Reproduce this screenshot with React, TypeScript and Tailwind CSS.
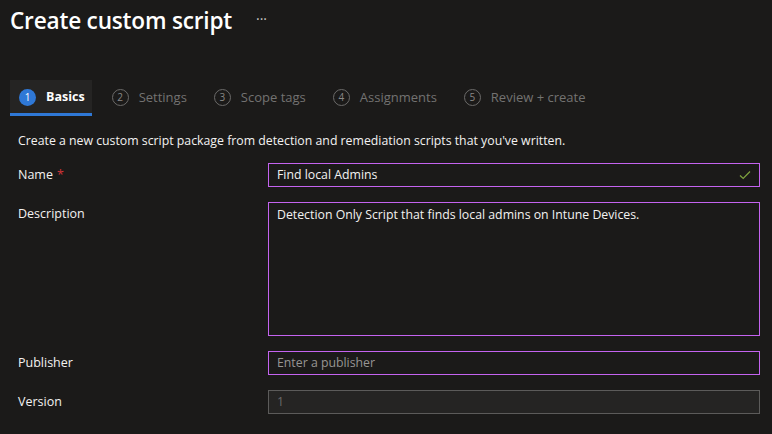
import React from 'react';

const steps = ['Basics', 'Settings', 'Scope tags', 'Assignments', 'Review + create'];

const Label: React.FC<{ text: string; required?: boolean }> = ({ text, required }) => (
  <div className="w-[250px] shrink-0 text-[12.5px] text-[#f3f2f1]">
    {text}
    {required && <span className="ml-1 text-[#d13438]">*</span>}
  </div>
);

const App: React.FC = () => {
  return (
    <div
      className="w-[772px] h-[434px] overflow-hidden bg-[#1b1a19] text-[#f3f2f1]"
      style={{ fontFamily: '"Open Sans", "Noto Sans", sans-serif' }}
    >
      {/* Header */}
      <div className="flex items-center pl-[10px] pt-[3px] h-[38px]">
        <h1 className="text-[22.6px] font-semibold tracking-[-0.2px] text-white">Create custom script</h1>
        <span className="ml-[24px] -mt-[4px] text-[14px] text-[#c8c6c4]">···</span>
      </div>

      {/* Wizard tabs */}
      <div className="flex items-stretch h-[36px] mt-[42px] ml-[10px]">
        {steps.map((step, i) => {
          const active = i === 0;
          return (
            <div
              key={step}
              className={`flex items-center gap-[10px] pl-[9px] pr-[7px] mr-[11px] pt-[2px] border-b-[3px] ${
                active ? 'bg-[#252423] border-[#2f78d6]' : 'border-transparent'
              }`}
            >
              <span
                className={`w-[17px] h-[17px] rounded-full flex items-center justify-center text-[10px] ${
                  active ? 'bg-[#2f78d6] text-white' : 'border border-[#6b6a69] text-[#8a8886]'
                }`}
              >
                {i + 1}
              </span>
              <span className={active ? 'text-[12.5px] font-bold text-white' : 'text-[13px] text-[#737271]'}>
                {step}
              </span>
            </div>
          );
        })}
      </div>

      {/* Form */}
      <div className="pl-[18px] pr-[12px]">
        <p className="mt-[16px] text-[12.3px] text-[#f3f2f1]">
          Create a new custom script package from detection and remediation scripts that you've written.
        </p>

        <div className="flex items-center mt-[13px]">
          <Label text="Name" required />
          <div className="flex-1 h-[24px] border border-[#c463f0] flex items-center px-[8px] text-[12.3px]">
            <span className="flex-1">Find local Admins</span>
            <svg width="12" height="10" viewBox="0 0 12 10" fill="none">
              <path d="M1 5.5 L4.2 8.5 L11 1.5" stroke="#7fa33f" strokeWidth="1.2" />
            </svg>
          </div>
        </div>

        <div className="flex items-start mt-[15px]">
          <div className="pt-[3px]">
            <Label text="Description" />
          </div>
          <div className="flex-1 h-[134px] border border-[#c463f0] px-[8px] pt-[3px] text-[12.3px]">
            Detection Only Script that finds local admins on Intune Devices.
          </div>
        </div>

        <div className="flex items-center mt-[15px]">
          <Label text="Publisher" />
          <div className="flex-1 h-[24px] border border-[#c463f0] flex items-center px-[8px] text-[12.3px] text-[#979593]">
            Enter a publisher
          </div>
        </div>

        <div className="flex items-center mt-[15px]">
          <Label text="Version" />
          <div className="flex-1 h-[24px] border border-[#5c5b5a] bg-[#252423] flex items-center px-[8px] text-[12.3px] text-[#6b6a69]">
            1
          </div>
        </div>
      </div>
    </div>
  );
};

export default App;
